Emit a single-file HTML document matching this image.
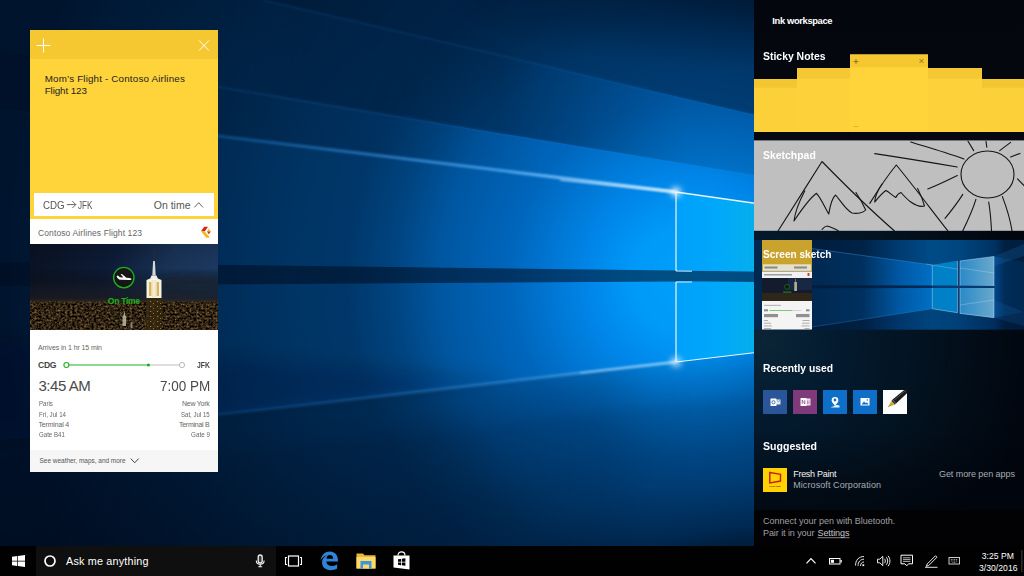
<!DOCTYPE html>
<html lang="en">
<head>
<meta charset="utf-8">
<title>Windows Ink Workspace</title>
<style>
*{box-sizing:border-box;margin:0;padding:0}
html,body{width:1024px;height:576px;overflow:hidden;background:#03142f;font-family:"Liberation Sans",sans-serif;}
#desk{position:absolute;left:0;top:0;width:1024px;height:576px;overflow:hidden}
#wall{position:absolute;left:0;top:0;width:1024px;height:576px;display:block}
.abs{position:absolute}
.t{position:absolute;white-space:nowrap;line-height:1;transform-origin:0 0}
/* sticky note card */
#note{position:absolute;left:30px;top:30px;width:188px;height:442px;background:#fff;overflow:hidden}
#note .hd{position:absolute;left:0;top:0;width:188px;height:29px;background:#f5c832}
#note .yb{position:absolute;left:0;top:29px;width:188px;height:160px;background:#ffd33a}
#note .ins{position:absolute;left:4px;top:163px;width:180px;height:23px;background:#fff}
#note .ft{position:absolute;left:0;top:420px;width:188px;height:22px;background:#f6f6f6}
/* ink panel */
#panel{position:absolute;left:754px;top:0;width:270px;height:546px;overflow:hidden;background:#060a14}
#taskbar{position:absolute;left:0;top:546px;width:1024px;height:30px;background:#010102}
#search{position:absolute;left:36px;top:0;width:240px;height:30px;background:#0f0f10}
</style>
</head>
<body>
<div id="desk">
<!--WALL-->
<svg id="wall" width="1024" height="576" viewBox="0 0 1024 576">
<defs>
<radialGradient id="gBase" gradientUnits="userSpaceOnUse" cx="690" cy="280" r="700">
<stop offset="0" stop-color="#00a0fa"/><stop offset="0.083" stop-color="#0099f8"/><stop offset="0.153" stop-color="#0084e6"/><stop offset="0.257" stop-color="#0066bc"/><stop offset="0.36" stop-color="#0056a0"/><stop offset="0.424" stop-color="#004480"/><stop offset="0.49" stop-color="#00376a"/><stop offset="0.57" stop-color="#003464"/><stop offset="0.67" stop-color="#002d58"/><stop offset="0.81" stop-color="#002142"/><stop offset="0.98" stop-color="#00142e"/>
</radialGradient>
<linearGradient id="aR2" gradientUnits="userSpaceOnUse" x1="0" y1="0" x2="640" y2="0">
<stop offset="0" stop-color="#000a1c" stop-opacity="0.26"/><stop offset="0.6" stop-color="#000a1c" stop-opacity="0.14"/><stop offset="0.85" stop-color="#000a1c" stop-opacity="0"/><stop offset="1" stop-color="#000a1c" stop-opacity="0"/>
</linearGradient>
<linearGradient id="aR1" gradientUnits="userSpaceOnUse" x1="0" y1="0" x2="760" y2="0">
<stop offset="0" stop-color="#000a1c" stop-opacity="0"/><stop offset="0.13" stop-color="#000a1c" stop-opacity="0"/><stop offset="0.31" stop-color="#000a1c" stop-opacity="0.22"/><stop offset="0.4" stop-color="#000a1c" stop-opacity="0.34"/><stop offset="0.66" stop-color="#000a1c" stop-opacity="0.44"/><stop offset="0.9" stop-color="#000a1c" stop-opacity="0.16"/><stop offset="1" stop-color="#000a1c" stop-opacity="0.12"/>
</linearGradient>
<linearGradient id="aBand" gradientUnits="userSpaceOnUse" x1="0" y1="0" x2="760" y2="0">
<stop offset="0" stop-color="#000a1c" stop-opacity="0.46"/><stop offset="0.4" stop-color="#000a1c" stop-opacity="0.54"/><stop offset="1" stop-color="#000a1c" stop-opacity="0.54"/>
</linearGradient>
<linearGradient id="aLow" gradientUnits="userSpaceOnUse" x1="676" y1="362" x2="698.900" y2="560.700">
<stop offset="0" stop-color="#000a1c" stop-opacity="0.06"/><stop offset="0.09" stop-color="#000a1c" stop-opacity="0.14"/><stop offset="0.175" stop-color="#000a1c" stop-opacity="0.20"/><stop offset="0.24" stop-color="#000a1c" stop-opacity="0.28"/><stop offset="0.5" stop-color="#000a1c" stop-opacity="0.37"/><stop offset="0.625" stop-color="#000a1c" stop-opacity="0.41"/><stop offset="1" stop-color="#000a1c" stop-opacity="0.48"/>
</linearGradient>
<linearGradient id="aLowX" gradientUnits="userSpaceOnUse" x1="0" y1="0" x2="760" y2="0">
<stop offset="0" stop-color="#000a1c" stop-opacity="0.34"/><stop offset="0.33" stop-color="#000a1c" stop-opacity="0.27"/><stop offset="0.4" stop-color="#000a1c" stop-opacity="0.23"/><stop offset="0.53" stop-color="#000a1c" stop-opacity="0.18"/><stop offset="0.66" stop-color="#000a1c" stop-opacity="0.12"/><stop offset="0.79" stop-color="#000a1c" stop-opacity="0.12"/><stop offset="0.86" stop-color="#000a1c" stop-opacity="0.03"/><stop offset="0.92" stop-color="#000a1c" stop-opacity="0"/><stop offset="1" stop-color="#000a1c" stop-opacity="0"/>
</linearGradient>
<radialGradient id="aCorner" gradientUnits="userSpaceOnUse" cx="0" cy="0" r="1" gradientTransform="translate(770 575) scale(260 100)">
<stop offset="0" stop-color="#000a1c" stop-opacity="0.6"/><stop offset="0.369" stop-color="#000a1c" stop-opacity="0.42"/><stop offset="0.524" stop-color="#000a1c" stop-opacity="0.24"/><stop offset="0.751" stop-color="#000a1c" stop-opacity="0.1"/><stop offset="1" stop-color="#000a1c" stop-opacity="0"/>
</radialGradient>
<radialGradient id="aCornerT" gradientUnits="userSpaceOnUse" cx="0" cy="0" r="1" gradientTransform="translate(780 -10) scale(400 90)">
<stop offset="0" stop-color="#000a1c" stop-opacity="0.55"/><stop offset="0.243" stop-color="#000a1c" stop-opacity="0.43"/><stop offset="0.5" stop-color="#000a1c" stop-opacity="0.25"/><stop offset="0.75" stop-color="#000a1c" stop-opacity="0.08"/><stop offset="0.88" stop-color="#000a1c" stop-opacity="0"/><stop offset="1" stop-color="#000a1c" stop-opacity="0"/>
</radialGradient>
<linearGradient id="gPane" gradientUnits="userSpaceOnUse" x1="676" y1="0" x2="760" y2="0">
<stop offset="0" stop-color="#00a0fa"/><stop offset="0.5" stop-color="#00a8fa"/><stop offset="1" stop-color="#06b0ea"/>
</linearGradient>
<linearGradient id="gl1" gradientUnits="userSpaceOnUse" x1="0" y1="0" x2="676" y2="0">
<stop offset="0" stop-color="#2a8ae0" stop-opacity="0"/><stop offset="0.2" stop-color="#2a8ae0" stop-opacity="0.12"/><stop offset="0.4" stop-color="#2a8ae0" stop-opacity="0.42"/><stop offset="0.75" stop-color="#58b4ff" stop-opacity="0.75"/><stop offset="1" stop-color="#d0ecff" stop-opacity="1"/>
</linearGradient>
<filter id="b1" filterUnits="userSpaceOnUse" x="-20" y="-20" width="1064" height="616"><feGaussianBlur stdDeviation="1.2"/></filter>
<filter id="b12" filterUnits="userSpaceOnUse" x="-60" y="-60" width="1144" height="696"><feGaussianBlur stdDeviation="9"/></filter>
<filter id="b3" filterUnits="userSpaceOnUse" x="-20" y="-20" width="1064" height="616"><feGaussianBlur stdDeviation="3"/></filter>
</defs>
<rect width="1024" height="576" fill="url(#gBase)"/>
<!-- top regions -->
<polygon points="263,0 1024,0 1024,179 760,116" fill="#000a1c" fill-opacity="0.46"/>
<polygon points="0,0 263,0 760,116 1024,179 1024,220 760,176 0,51" fill="url(#aR1)"/>
<polygon points="0,51 760,176 760,204 676,192 0,109" fill="url(#aR2)"/>
<!-- band -->
<polygon points="0,262 676,270.500 760,271.500 760,282 676,281.500 0,286" fill="url(#aBand)"/>
<!-- lower -->
<polygon points="0,440 676,362 760,352 1024,330 1024,576 0,576" fill="url(#aLow)"/>
<polygon points="0,440 676,362 760,352 1024,330 1024,576 0,576" fill="url(#aLowX)"/>
<polygon points="-40,335 520,381 -40,446" fill="#000a1c" fill-opacity="0.200" filter="url(#b12)"/>
<rect x="480" y="460" width="300" height="116" fill="url(#aCorner)"/>
<rect x="360" y="0" width="420" height="90" fill="url(#aCornerT)"/>
<!-- panes -->
<polygon points="676,192 760,204 760,271.500 676,270.500" fill="url(#gPane)"/>
<polygon points="676,281.500 760,282 760,352 676,362" fill="url(#gPane)"/>
<!-- glow lines -->
<g fill="none">
<line x1="0" y1="109" x2="676" y2="192" stroke="url(#gl1)" stroke-width="3" filter="url(#b1)"/>
<line x1="0" y1="440" x2="676" y2="362" stroke="url(#gl1)" stroke-opacity="0.450" stroke-width="3" filter="url(#b1)"/>
<line x1="200" y1="83.900" x2="760" y2="176" stroke="#2a7ad0" stroke-opacity="0.160" stroke-width="2" filter="url(#b1)"/>
<line x1="263" y1="0" x2="760" y2="116" stroke="#2a7ad0" stroke-opacity="0.140" stroke-width="2" filter="url(#b1)"/>
<line x1="560" y1="180" x2="676" y2="192" stroke="#e8f6ff" stroke-opacity="0.800" stroke-width="1.200" filter="url(#b1)"/>
<line x1="676" y1="192" x2="760" y2="204" stroke="#e8f4ff" stroke-width="1.300"/>
<line x1="676" y1="192" x2="676" y2="271" stroke="#d8eeff" stroke-width="1.300"/>
<line x1="676" y1="271" x2="692" y2="271.200" stroke="#d8eeff" stroke-width="1"/>
<line x1="676" y1="282" x2="676" y2="362" stroke="#d8eeff" stroke-width="1.300"/>
<line x1="676" y1="282" x2="692" y2="282" stroke="#d8eeff" stroke-width="1"/>
<line x1="676" y1="362" x2="760" y2="352" stroke="#e8f4ff" stroke-width="1.200"/>
<line x1="580" y1="373" x2="676" y2="362" stroke="#c8e8ff" stroke-opacity="0.700" stroke-width="1.200" filter="url(#b1)"/>
</g>
<circle cx="676" cy="192" r="5" fill="#fff" fill-opacity="0.850" filter="url(#b3)"/>
<circle cx="676" cy="362" r="5" fill="#fff" fill-opacity="0.750" filter="url(#b3)"/>
</svg>
<!--/WALL-->
<!--NOTE-->
<div id="note">
<div class="hd"></div><div class="yb"></div><div class="ins"></div><div class="ft"></div>
<svg class="abs" style="left:0;top:0" width="188" height="442" viewBox="0 0 188 442">
<defs>
<linearGradient id="sky" x1="0" y1="0" x2="1" y2="0.2"><stop offset="0" stop-color="#0a1222"/><stop offset="0.45" stop-color="#0d1b36"/><stop offset="0.75" stop-color="#193256"/><stop offset="1" stop-color="#1c3860"/></linearGradient>
<linearGradient id="city" x1="0" y1="0" x2="0" y2="1"><stop offset="0" stop-color="#2a2418"/><stop offset="0.3" stop-color="#3a2d17"/><stop offset="1" stop-color="#1f170c"/></linearGradient>
<linearGradient id="skyfade" x1="0" y1="0" x2="0" y2="1"><stop offset="0" stop-color="#000" stop-opacity="0.1"/><stop offset="0.4" stop-color="#000" stop-opacity="0"/><stop offset="0.75" stop-color="#18181c" stop-opacity="0.55"/><stop offset="1" stop-color="#1c1c20" stop-opacity="0.9"/></linearGradient>
<linearGradient id="haze" x1="0" y1="0" x2="0" y2="1"><stop offset="0" stop-color="#3a3020" stop-opacity="0"/><stop offset="0.6" stop-color="#3a3020" stop-opacity="0.5"/><stop offset="1" stop-color="#2a2010" stop-opacity="0"/></linearGradient>
<filter id="pb2" x="-20%" y="-100%" width="140%" height="300%"><feGaussianBlur stdDeviation="3"/></filter>
<filter id="cityN" x="0" y="0" width="100%" height="100%" color-interpolation-filters="sRGB"><feTurbulence type="fractalNoise" baseFrequency="0.42 0.5" numOctaves="2" seed="11"/><feColorMatrix type="matrix" values="0.95 0 0 0 -0.285  0.72 0 0 0 -0.22  0.32 0 0 0 -0.08  0 0 0 0 1"/><feGaussianBlur stdDeviation="0.35"/></filter>
<pattern id="lights" width="7" height="5" patternUnits="userSpaceOnUse"><rect x="1" y="1" width="1.2" height="1" fill="#c89a3c" fill-opacity="0.75"/><rect x="4" y="3" width="1" height="1" fill="#e0b050" fill-opacity="0.6"/><rect x="5.5" y="0.5" width="0.8" height="0.8" fill="#8a6a2c" fill-opacity="0.8"/></pattern>
<pattern id="lights2" width="11" height="7" patternUnits="userSpaceOnUse"><rect x="2" y="2" width="1" height="1.2" fill="#f0c868" fill-opacity="0.7"/><rect x="7" y="5" width="1.3" height="1" fill="#a87c30" fill-opacity="0.8"/><rect x="9" y="1" width="0.8" height="2" fill="#14100a" fill-opacity="0.6"/><rect x="4" y="4" width="1.5" height="2.5" fill="#14100a" fill-opacity="0.5"/></pattern>
</defs>
<!-- plus / close -->
<path d="M6.5 15.500H20.500M13.500 8.500V22.500" stroke="#fff" stroke-width="1" fill="none"/>
<path d="M169 10.500L179 20.500M179 10.500L169 20.500" stroke="#fff" stroke-width="1" fill="none"/>
<!-- arrow in CDG -> JFK -->
<path d="M36.900 174.600H45.700M42.400 171.200L45.800 174.600L42.400 178" stroke="#555" stroke-width="0.9" fill="none"/>
<!-- caret up -->
<path d="M164.400 177.400L168.700 172.700L173 177.400" stroke="#555" stroke-width="0.9" fill="none"/>
<!-- logo -->
<g><path d="M174.300 196.800L178 196.800L174.700 201.500L171 201.300Z" fill="#d42416"/><path d="M171.200 201.500L174.900 201.500L180 207.700L176.300 207.700Z" fill="#f4b81e"/><path d="M178.800 198.600L180.800 201.500L176.900 201.500Z" fill="#f6c020"/><path d="M176.900 201.500L180.800 201.500L178.800 204.200Z" fill="#d62a18"/></g>
<!-- photo -->
<g>
<rect x="0" y="214" width="188" height="86" fill="url(#sky)"/>
<rect x="0" y="214" width="188" height="60" fill="url(#skyfade)"/>
<ellipse cx="165" cy="252" rx="40" ry="7" fill="#161c2c" fill-opacity="0.550" filter="url(#pb2)"/>
<rect x="0" y="271.500" width="188" height="28.500" fill="#2a2010" filter="url(#cityN)"/>
<rect x="0" y="268" width="188" height="6" fill="url(#haze)"/>
<rect x="0" y="273" width="188" height="27" fill="url(#lights2)" fill-opacity="0.350"/>
<!-- empire state -->
<path d="M123.700 216.800L124.300 216.800L124.800 232.500L123.200 232.500Z" fill="#2a2c34"/>
<path d="M123.100 231L124.900 231L125.700 245.500H122.300Z" fill="#d4d8dc"/>
<path d="M121.500 245.500H126.500L127.800 248.500L131.500 250V268H116.500V250L120.200 248.500Z" fill="#f4f0e2"/>
<rect x="119" y="252" width="2.400" height="14" fill="#d9b65c"/><rect x="126.600" y="252" width="2.400" height="14" fill="#d9b65c"/><rect x="122.600" y="250" width="2.800" height="17" fill="#e8d49a"/>
<rect x="123.400" y="249" width="1.200" height="18" fill="#fffef6"/>
<rect x="116" y="268" width="16" height="32" fill="#33270f" fill-opacity="0.800"/>
<rect x="117" y="270" width="14" height="30" fill="url(#lights)"/>
<rect x="92.500" y="286" width="3.600" height="10" fill="#bcb8a6" fill-opacity="0.850"/><path d="M94.300 280.500L95.200 286H93.400Z" fill="#bcb8a6"/>
<rect x="100.500" y="292" width="2" height="6" fill="#a8a8a0" fill-opacity="0.700"/>
<!-- circle + plane -->
<circle cx="93.800" cy="247.600" r="10.200" fill="#161616" stroke="#1fb01f" stroke-width="1.300"/>
<path d="M86.600 245.900L88 245.500L89.800 247.300L93.400 247.600L90.600 244.300L91.900 244.100L96.400 247.700L99.300 247.900C100.700 248 101.500 248.500 101.500 249C101.500 249.600 100.600 250 99.300 250L90.500 249.700C88.500 249.500 87 248 86.600 245.900Z" fill="#fff"/>
</g>
<!-- progress -->
<line x1="39" y1="335" x2="118" y2="335" stroke="#1fb01f" stroke-width="1.200"/>
<line x1="118" y1="335" x2="149" y2="335" stroke="#bdbdbd" stroke-width="1"/>
<circle cx="36.400" cy="335" r="2.500" fill="#fff" stroke="#1fb01f" stroke-width="1.100"/>
<circle cx="118.400" cy="335" r="1.600" fill="#1fb01f"/>
<circle cx="152" cy="335" r="2.600" fill="#fff" stroke="#b8b8b8" stroke-width="1"/>
<!-- chevron down -->
<path d="M100.800 428.600L104.700 432.800L108.600 428.600" stroke="#444" stroke-width="1" fill="none"/>
</svg>
<span class="t" id="n1" style="left:14.70px;top:43.60px;font-size:9.8px;color:#222;letter-spacing:0.175px">Mom’s Flight - Contoso Airlines</span>
<span class="t" id="n2" style="left:14.70px;top:55.60px;font-size:9.8px;color:#222;letter-spacing:-0.092px">Flight 123</span>
<span class="t" id="n3" style="left:12.50px;top:169.81px;font-size:10.500px;color:#555;letter-spacing:0px;transform:scaleX(0.9253)">CDG</span>
<span class="t" id="n3b" style="left:48.40px;top:169.81px;font-size:10.500px;color:#555;letter-spacing:0px;transform:scaleX(0.7712)">JFK</span>
<span class="t" id="n4" style="left:123.70px;top:169.81px;font-size:10.500px;color:#555;letter-spacing:0.022px">On time</span>
<span class="t" id="n5" style="left:8.00px;top:198.60px;font-size:8.500px;color:#666;letter-spacing:0.111px">Contoso Airlines Flight 123</span>
<span class="t" id="n6" style="left:77.80px;top:266.50px;font-size:8.500px;color:#1fb01f;font-weight:bold;letter-spacing:-0.277px">On Time</span>
<span class="t" id="n7" style="left:8.00px;top:313.67px;font-size:7px;color:#666;letter-spacing:-0.102px">Arrives in 1 hr 15 min</span>
<span class="t" id="n8" style="left:8.00px;top:331.12px;font-size:8.600px;color:#444;font-weight:bold;letter-spacing:-0.305px">CDG</span>
<span class="t" id="n9" style="left:166.80px;top:331.12px;font-size:8.600px;color:#444;font-weight:bold;letter-spacing:0px;transform:scaleX(0.7938)">JFK</span>
<span class="t" id="n10" style="left:8.50px;top:348.30px;font-size:15px;color:#4a4a4a;letter-spacing:-0.474px">3:45 AM</span>
<span class="t" id="n11" style="left:129.50px;top:348.30px;font-size:15px;color:#4a4a4a;letter-spacing:0px;transform:scaleX(0.8984)">7:00 PM</span>
<span class="t" id="n12" style="left:8.50px;top:370.47px;font-size:7px;color:#666;letter-spacing:0px;transform:scaleX(0.8713)">Paris</span>
<span class="t" id="n13" style="left:8.50px;top:380.77px;font-size:7px;color:#666;letter-spacing:0px;transform:scaleX(0.8785)">Fri, Jul 14</span>
<span class="t" id="n14" style="left:8.50px;top:391.07px;font-size:7px;color:#666;letter-spacing:-0.177px">Terminal 4</span>
<span class="t" id="n15" style="left:8.50px;top:401.47px;font-size:7px;color:#666;letter-spacing:0px;transform:scaleX(0.8723)">Gate B41</span>
<span class="t r" id="n16" style="top:370.47px;font-size:7px;color:#666;letter-spacing:-0.268px;left:152.00px">New York</span>
<span class="t r" id="n17" style="top:380.77px;font-size:7px;color:#666;letter-spacing:0px;left:151.00px;transform:scaleX(0.8676)">Sat, Jul 15</span>
<span class="t r" id="n18" style="top:391.07px;font-size:7px;color:#666;letter-spacing:-0.264px;left:149.00px">Terminal B</span>
<span class="t r" id="n19" style="top:401.47px;font-size:7px;color:#666;letter-spacing:0px;left:160.80px;transform:scaleX(0.8993)">Gate 9</span>
<span class="t" id="n20" style="left:9.50px;top:427.70px;font-size:6.500px;color:#555;letter-spacing:-0.024px">See weather, maps, and more</span>
</div>
<!--/NOTE-->
<!--PANEL-->
<div id="panel">
<svg class="abs" style="left:0;top:0" width="270" height="546" viewBox="0 0 270 546">
<defs>
<radialGradient id="pbg" gradientUnits="userSpaceOnUse" cx="10" cy="340" r="270">
<stop offset="0" stop-color="#0b2436"/><stop offset="0.3" stop-color="#031a2e"/><stop offset="0.6" stop-color="#03121f"/><stop offset="1" stop-color="#01060f"/>
</radialGradient>
<linearGradient id="pbot" x1="0" y1="0" x2="0" y2="1"><stop offset="0" stop-color="#01040a" stop-opacity="0"/><stop offset="1" stop-color="#01040a" stop-opacity="0.55"/></linearGradient>
<linearGradient id="ptop" x1="0" y1="0" x2="0" y2="1"><stop offset="0" stop-color="#04060d"/><stop offset="1" stop-color="#05080f"/></linearGradient>
<linearGradient id="ssbg" gradientUnits="userSpaceOnUse" x1="0" y1="0" x2="270" y2="0">
<stop offset="0.2" stop-color="#002850"/><stop offset="0.4" stop-color="#00305e"/><stop offset="0.54" stop-color="#0058a4"/><stop offset="0.66" stop-color="#0070c4"/><stop offset="0.76" stop-color="#0068b8"/><stop offset="0.89" stop-color="#00488c"/><stop offset="0.93" stop-color="#002c58"/><stop offset="1" stop-color="#002850"/>
</linearGradient>
<linearGradient id="ssp" gradientUnits="userSpaceOnUse" x1="206" y1="0" x2="240" y2="0"><stop offset="0" stop-color="#2a8ac8"/><stop offset="1" stop-color="#6aa8cc"/></linearGradient>
</defs>
<rect width="270" height="546" fill="url(#pbg)"/>
<rect width="270" height="140" fill="url(#ptop)"/>
<rect x="0" y="430" width="270" height="80" fill="url(#pbot)"/>
<!-- sticky notes tile -->
<rect x="0" y="79" width="270" height="53" fill="#fcd039"/>
<rect x="0" y="79" width="270" height="8.700" fill="#f3c631"/>
<rect x="43" y="68" width="185" height="64" fill="#fdd13a"/>
<rect x="43" y="68" width="185" height="10.500" fill="#f4c832"/>
<rect x="96" y="54.500" width="78" height="77.500" fill="#ffd43b"/>
<rect x="96" y="54.500" width="78" height="12.800" fill="#f5c832"/>
<path d="M99.500 61.500H104.500M102 59V64" stroke="#6b5a20" stroke-width="0.700" fill="none"/>
<path d="M165.500 59L169.500 63M169.500 59L165.500 63" stroke="#6b5a20" stroke-width="0.700" fill="none"/>
<path d="M99.500 126.500H104.500" stroke="#c8a62c" stroke-width="0.700"/>
<!-- sketchpad tile -->
<rect x="0" y="140.400" width="270" height="90.400" fill="#bfbfbf"/>
<g fill="none" stroke="#151515" stroke-width="1.100" stroke-linecap="round" stroke-linejoin="round">
<path d="M24 231C36 212 54 184 68 161.500C88 182 112 206 140.500 231"/>
<path d="M50.700 191C46 200 41 212 40 221C46 212 56 198 62.500 193.300C67 198 71 208 74.800 214C76 206 78 198 81.600 195C86 200 92 210 98 213C103 214 109 213 111.700 210C109 204 105 197 102 192.500"/>
<path d="M68 229.400C70 227 72 226 73.400 226C77 227 81 229 84.300 230.700"/>
<path d="M115.800 203.400C124 190 134 175 142.300 165C158 184 176 208 193.700 230.700"/>
<path d="M128 184C124 190 121 197 120.700 202C124 198 128 193 132 190.500C135 192 139 196 141.800 197.400C143 195 145 193 147 192.500C150 196 154 200 156.800 202C161 205 167 207 170.500 206C169 200 166 193 163.600 188.400"/>
<ellipse cx="233.500" cy="174.500" rx="26.500" ry="23.500"/>
<path d="M120.700 153.600C150 158 180 163 203.300 167"/><path d="M156.800 141.900C176 148 196 154 210 159"/>
<path d="M214 141.300L219.700 150.600"/><path d="M232 141.300L232.800 147.300"/><path d="M256.600 142.400L245.700 150.600"/><path d="M266 153.400L256.600 157"/>
<path d="M263.500 178.800L270 185.600"/><path d="M173.800 189C184 185 194 180 203.300 175.500"/>
<path d="M191 218.400C198 210 204 202 208.800 194.400"/><path d="M208.800 230.700C214 220 219 209 221.900 199.300"/>
<path d="M237.500 230.700C237 220 236 210 234.700 202"/><path d="M258 230.700C256 218 252 206 248.400 196.600"/>
</g>
<!-- screen sketch tile -->
<g>
<rect x="0" y="240" width="270" height="89.500" fill="url(#ssbg)"/>
<polygon points="58,240 270,240 270,262 240,256.400 206,261 178.300,265 58,248.600" fill="#000a1c" fill-opacity="0.360"/>
<polygon points="58,327 178.300,308.750 203.500,312.700 206,313.400 240,317.700 270,312 270,329.500 58,329.500" fill="#000a1c" fill-opacity="0.420"/>
<polygon points="58,285.300 178.300,285.600 178.300,288 58,288.300" fill="#001a38" fill-opacity="0.800"/>
<path d="M58 248.600L178.300 265" stroke="#3a9af0" stroke-opacity="0.450" stroke-width="0.900" fill="none"/>
<path d="M178.300 308.750L58 327" stroke="#3a9af0" stroke-opacity="0.300" stroke-width="0.900" fill="none"/>
<polygon points="240,256.400 270,244 270,256 240,266" fill="#1a6ab8" fill-opacity="0.250"/>
<polygon points="240,300 270,312 270,326 240,317.700" fill="#1a6ab8" fill-opacity="0.200"/>
<polygon points="178.300,265 203.500,260.800 203.500,285.800 178.300,285.600" fill="#0080c6"/>
<polygon points="178.300,288 203.500,288 203.500,312.700 178.300,308.750" fill="#0080c6"/>
<polygon points="206,261 240,256.400 240,286 206,285.800" fill="url(#ssp)"/>
<polygon points="206,288 240,288 240,317.700 206,313.400" fill="url(#ssp)"/>
<polygon points="178.300,285.600 240,286 240,288 178.300,288" fill="#063a70"/>
<polygon points="203.500,260.800 206,261 206,313.400 203.500,312.700" fill="#0a3c72"/>
<path d="M172 264L203.500 269.200M206 268L240 273M206 305L240 300" stroke="#cfe8ff" stroke-opacity="0.350" stroke-width="0.800" fill="none"/>
<path d="M178.300 265V285.600M178.300 288V308.750L203.500 312.700M206 261L240 256.400V286M206 261V285.800M206 288V313.400L240 317.700V288M203.500 260.800V285.800M203.500 288V312.700" stroke="#d0eaff" stroke-opacity="0.700" stroke-width="0.600" fill="none"/>
<!-- mini card -->
<rect x="8" y="240" width="50" height="31.500" fill="#c9a32e"/>
<rect x="9" y="264.300" width="48" height="6.500" fill="#e4e0d0"/>
<rect x="8" y="271.500" width="50" height="6.500" fill="#f2f2f2"/>
<rect x="8" y="278" width="50" height="23" fill="#131b2c"/>
<rect x="34" y="278" width="24" height="12" fill="#1c2c48" fill-opacity="0.800"/>
<rect x="8" y="293" width="50" height="8" fill="#2e2618"/>
<rect x="40.300" y="282" width="2.600" height="9" fill="#b8b09a"/><rect x="41.200" y="279" width="0.700" height="3" fill="#98948a"/>
<circle cx="33" cy="286.800" r="2.500" fill="#161616" stroke="#1f9a1f" stroke-width="0.500"/>
<rect x="29" y="291.500" width="8.500" height="1.300" fill="#1f8a1f" fill-opacity="0.800"/>
<rect x="8" y="301" width="50" height="28.500" fill="#f4f4f4"/>
<rect x="15.500" y="310" width="23" height="0.800" fill="#5cc05c"/><rect x="38.500" y="310" width="9" height="0.700" fill="#c8c8c8"/>
<rect x="10" y="309.300" width="4" height="2" fill="#8a8a8a"/><rect x="52" y="309.300" width="3.500" height="2" fill="#8a8a8a"/>
<rect x="10" y="304.800" width="17" height="1.200" fill="#b8b8b8"/>
<rect x="10" y="314" width="14" height="3.200" fill="#909090"/><rect x="42" y="314" width="13.500" height="3.200" fill="#909090"/>
<rect x="10" y="320" width="4" height="1" fill="#b0b0b0"/><rect x="10" y="322.700" width="7" height="1" fill="#b0b0b0"/><rect x="10" y="325.400" width="8" height="1" fill="#b0b0b0"/><rect x="10" y="328" width="7" height="1" fill="#b0b0b0"/>
<rect x="48.500" y="320" width="7" height="1" fill="#b0b0b0"/><rect x="48" y="322.700" width="7.500" height="1" fill="#b0b0b0"/><rect x="47.500" y="325.400" width="8" height="1" fill="#b0b0b0"/><rect x="50.500" y="328" width="5" height="1" fill="#b0b0b0"/>
<rect x="10.500" y="266.500" width="13" height="2" fill="#8c887a"/><rect x="40" y="266.500" width="13" height="2" fill="#8c887a"/>
<rect x="10" y="274" width="28" height="1.500" fill="#9c9c9c"/><rect x="53.500" y="273" width="2" height="3" fill="#d04a20"/>
</g>
<!-- recent icons -->
<rect x="9" y="390" width="24" height="24" fill="#2a5699"/>
<rect x="39" y="390" width="24" height="24" fill="#80397b"/>
<rect x="69" y="390" width="24" height="24" fill="#0f6fc8"/>
<rect x="99" y="390" width="24" height="24" fill="#0f6fc8"/>
<rect x="129" y="390" width="24" height="24" fill="#fdfdfd"/>
<!-- outlook-like -->
<g fill="#fff"><rect x="16.500" y="398.500" width="6" height="7.500" rx="0.500"/><rect x="22" y="399.500" width="4.500" height="5" fill-opacity="0.850"/></g>
<circle cx="19.500" cy="402.200" r="1.600" fill="none" stroke="#2a5699" stroke-width="0.800"/>
<path d="M22.500 400L24.300 401.600L26.200 400" stroke="#2a5699" stroke-width="0.500" fill="none"/>
<!-- onenote-like -->
<g fill="#fff"><rect x="46.500" y="398" width="6" height="8" rx="0.500"/><rect x="52" y="398.500" width="4.500" height="7" fill-opacity="0.850"/></g>
<path d="M48.200 404V400L50.800 404V400" stroke="#80397b" stroke-width="0.700" fill="none"/>
<path d="M53.500 400.500V404M55 400.500V404" stroke="#80397b" stroke-width="0.500" fill="none"/>
<!-- maps-like -->
<circle cx="81" cy="400.200" r="3.300" fill="#fff"/><circle cx="81" cy="400" r="1.400" fill="#0f6fc8"/>
<path d="M78.500 402.500L81 406L83.500 402.500Z" fill="#fff"/>
<path d="M76.500 405.500C78 404.800 79 404.800 79.500 405M82.500 405C83 404.800 84 404.800 85.500 405.500V407.500H76.500Z" fill="#fff" fill-opacity="0.900"/>
<!-- photos-like -->
<rect x="106.500" y="398" width="9" height="7.500" fill="#fff"/>
<path d="M107.500 404.500L110 401.500L111.800 403.300L113 402.200L114.500 404.500Z" fill="#0f6fc8"/><circle cx="113.300" cy="400" r="0.700" fill="#0f6fc8"/>
<!-- pen -->
<path d="M153 393.200L153 390L150.200 390L138.600 399.600L142 403.400Z" fill="#1a1a1a"/>
<path d="M151.500 390.600L140.200 400" stroke="#6a6a6a" stroke-width="0.700"/>
<path d="M142 403.400L138.600 399.600L137.300 401L140.600 404.700Z" fill="#3a3a3a"/>
<path d="M140.600 404.700L137.300 401L134 407Z" fill="#d8a838"/>
<path d="M134 407L137.600 404.300" stroke="#7a5a18" stroke-width="0.400"/>
<!-- fresh paint -->
<rect x="9" y="468" width="24" height="24" fill="#ffd200"/>
<path d="M15.800 472.500L26.500 474.300L26.500 481L15.800 482.900Z" fill="none" stroke="#c8201a" stroke-width="1.500" stroke-linejoin="miter"/>
<!-- bottom black -->
<rect x="0" y="510" width="270" height="36" fill="#020204"/>
<line x1="63.500" y1="537.700" x2="95.500" y2="537.700" stroke="#bbb" stroke-width="0.700"/>
</svg>
<span class="t" id="p1" style="left:18.30px;top:16.34px;font-size:9.400px;color:#fff;font-weight:bold;letter-spacing:-0.369px">Ink workspace</span>
<span class="t" id="p2" style="left:9.40px;top:50.57px;font-size:11.500px;color:#fff;font-weight:bold;letter-spacing:0px;transform:scaleX(0.9068)">Sticky Notes</span>
<span class="t" id="p3" style="left:9.00px;top:149.97px;font-size:11.500px;color:#fff;font-weight:bold;letter-spacing:0px;transform:scaleX(0.9077)">Sketchpad</span>
<span class="t" id="p4" style="left:9.00px;top:248.77px;font-size:11.500px;color:#fff;font-weight:bold;letter-spacing:0px;transform:scaleX(0.8782)">Screen sketch</span>
<span class="t" id="p5" style="left:9.00px;top:362.77px;font-size:11.500px;color:#fff;font-weight:bold;letter-spacing:0px;transform:scaleX(0.8976)">Recently used</span>
<span class="t" id="p6" style="left:9.00px;top:440.97px;font-size:11.500px;color:#fff;font-weight:bold;letter-spacing:0px;transform:scaleX(0.9184)">Suggested</span>
<span class="t" id="p7" style="left:39.20px;top:469.88px;font-size:9px;color:#f2f2f2;letter-spacing:-0.273px">Fresh Paint</span>
<span class="t" id="p8" style="left:39.20px;top:480.78px;font-size:9px;color:#a8acb2;letter-spacing:0.088px">Microsoft Corporation</span>
<span class="t" id="p9" style="left:185.00px;top:469.88px;font-size:9px;color:#a8acb2;letter-spacing:-0.072px">Get more pen apps</span>
<span class="t" id="p10" style="left:9.00px;top:517.18px;font-size:9px;color:#a0a0a0;letter-spacing:-0.009px">Connect your pen with Bluetooth.</span>
<span class="t" id="p11" style="left:9.00px;top:528.88px;font-size:9px;color:#a0a0a0;letter-spacing:-0.074px">Pair it in your</span>
<span class="t" id="p12" style="left:63.50px;top:528.88px;font-size:9px;color:#c4c4c4;letter-spacing:-0.090px">Settings</span>
<span class="t" id="p13" style="left:15.200px;top:485.10px;font-size:2.100px;color:#7a1a10;font-weight:bold">Fresh Paint</span>
</div>
<!--/PANEL-->
<!--TASKBAR-->
<div id="taskbar">
<div id="search"></div>
<svg class="abs" style="left:0;top:0" width="1024" height="30" viewBox="0 0 1024 30">
<!-- windows logo -->
<path d="M12 10.800L17.300 10.050V14.700H12ZM18 9.950L25 9V14.700H18ZM12 15.400H17.300V20L12 19.250ZM18 15.400H25V21.100L18 20.100Z" fill="#fff"/>
<!-- cortana -->
<circle cx="50" cy="15" r="5" fill="none" stroke="#fff" stroke-width="1.700"/>
<!-- mic -->
<rect x="258.200" y="9" width="4" height="8" rx="2" fill="#3a3a3a" stroke="#f0f0f0" stroke-width="1.300"/>
<path d="M256.300 14.500C256.300 19.600 264.100 19.600 264.100 14.500M260.200 18.400V20.600M258.300 20.800H262.100" stroke="#f0f0f0" stroke-width="1.100" fill="none"/>
<!-- task view -->
<rect x="288.500" y="10" width="10" height="10" fill="none" stroke="#fff" stroke-width="1.200"/>
<path d="M287 11.500H285.500V18.500H287M300 11.500H301.500V18.500H300" stroke="#fff" stroke-width="1.100" fill="none"/>
<!-- edge -->
<path d="M320.600 14.200C321.300 8.600 325.600 5.200 330.200 5.400C335.600 5.600 338.300 10 338 15.600H326.400C326.500 18.600 329 20 331.800 20C333.900 20 335.700 19.400 337.200 18.500V22.600C335.400 23.600 333.200 24.200 330.600 24.200C325.400 24.200 321.800 20.800 322 16C322.200 12.600 324.600 10.200 327.600 9.200C324.800 9.400 322.200 11.400 320.600 14.200ZM326.500 12.800H333.200C333.200 10.400 331.800 9 329.800 9C327.900 9 326.700 10.600 326.500 12.800Z" fill="#3083d6"/>
<!-- folder -->
<path d="M356.500 7.500H363L364.500 9.200H375.500V22.500H356.500Z" fill="#e8b838"/>
<path d="M356.500 11H375.500V22.500H356.500Z" fill="#ffd968"/>
<path d="M360.500 15H371.500V22.500H360.500Z" fill="#3a96dd"/>
<path d="M363 18.500H369V22.500H363Z" fill="#ffd968"/>
<!-- store -->
<path d="M393.500 9.600H409.500V23.500L393.500 21.500Z" fill="#fff"/>
<path d="M398 9.600C398 4.600 405 4.600 405 9.600" stroke="#fff" stroke-width="1.200" fill="none"/>
<path d="M398 13.300L401 12.900V15.700H398ZM401.800 12.800L405.400 12.300V15.700H401.800ZM398 16.400H401V19.200L398 18.800ZM401.800 16.400H405.400V19.800L401.800 19.300Z" fill="#010102"/>
<!-- tray caret -->
<path d="M806.500 17.300L811 12.700L815.500 17.300" stroke="#fff" stroke-width="1.200" fill="none"/>
<!-- battery -->
<rect x="829.500" y="12.500" width="10.500" height="5.500" fill="none" stroke="#fff" stroke-width="1"/>
<rect x="840.500" y="14" width="1.300" height="2.500" fill="#fff"/><rect x="830.800" y="13.800" width="3.200" height="3" fill="#fff"/>
<!-- wifi -->
<g fill="none" stroke="#fff" stroke-width="1" stroke-opacity="0.900"><path d="M855.500 19.500C855.500 14 859 10.500 864 10.500"/><path d="M858 19.800C858 15.800 860.500 13.200 864 13.200"/><path d="M860.500 20C860.500 17.500 862 16 864 16"/></g>
<rect x="862.400" y="18.300" width="1.800" height="1.800" fill="#fff"/>
<!-- volume -->
<path d="M877.500 13.200H879.800L882.800 10.300V19.700L879.800 16.800H877.500Z" fill="none" stroke="#fff" stroke-width="0.900"/>
<g fill="none" stroke="#fff" stroke-width="0.900"><path d="M884.500 12.800C885.600 14 885.600 16 884.500 17.200"/><path d="M886.300 11.200C888.200 13.400 888.200 16.600 886.300 18.800"/><path d="M888 9.800C890.600 12.800 890.600 17.200 888 20.200"/></g>
<!-- action center -->
<path d="M901 9.200H912.500V17.800H908.500L906.700 19.800L904.900 17.800H901Z" fill="none" stroke="#fff" stroke-width="1"/>
<path d="M903 11.800H910.500M903 13.600H910.500M903 15.400H910.500" stroke="#fff" stroke-width="0.700"/>
<!-- pen -->
<path d="M935.500 9.700L937 11.200L928.700 19.500L926.300 20.300L927.200 18Z" fill="none" stroke="#fff" stroke-width="0.900"/>
<path d="M925 21.300H937.500" stroke="#fff" stroke-width="0.900"/>
<!-- keyboard -->
<rect x="949" y="11.500" width="10.500" height="6.500" fill="none" stroke="#e0e0e0" stroke-width="0.900"/>
<path d="M950.800 13.500H957.800M950.800 15H957.800M952.500 16.600H956.200" stroke="#e0e0e0" stroke-width="0.700" stroke-dasharray="1 0.700"/>
<rect x="1021.500" y="4" width="0.800" height="22" fill="#555"/>
</svg>
<span class="t" id="k1" style="left:66.00px;top:9.86px;font-size:10.800px;color:#fff;letter-spacing:0.191px">Ask me anything</span>
<span class="t" id="k2" style="left:981.75px;top:6.02px;font-size:8.600px;color:#fff;letter-spacing:0.039px">3:25 PM</span>
<span class="t" id="k3" style="left:979.00px;top:18.02px;font-size:8.600px;color:#fff;letter-spacing:0.033px">3/30/2016</span>
</div>
<!--/TASKBAR-->
</div>
</body>
</html>
